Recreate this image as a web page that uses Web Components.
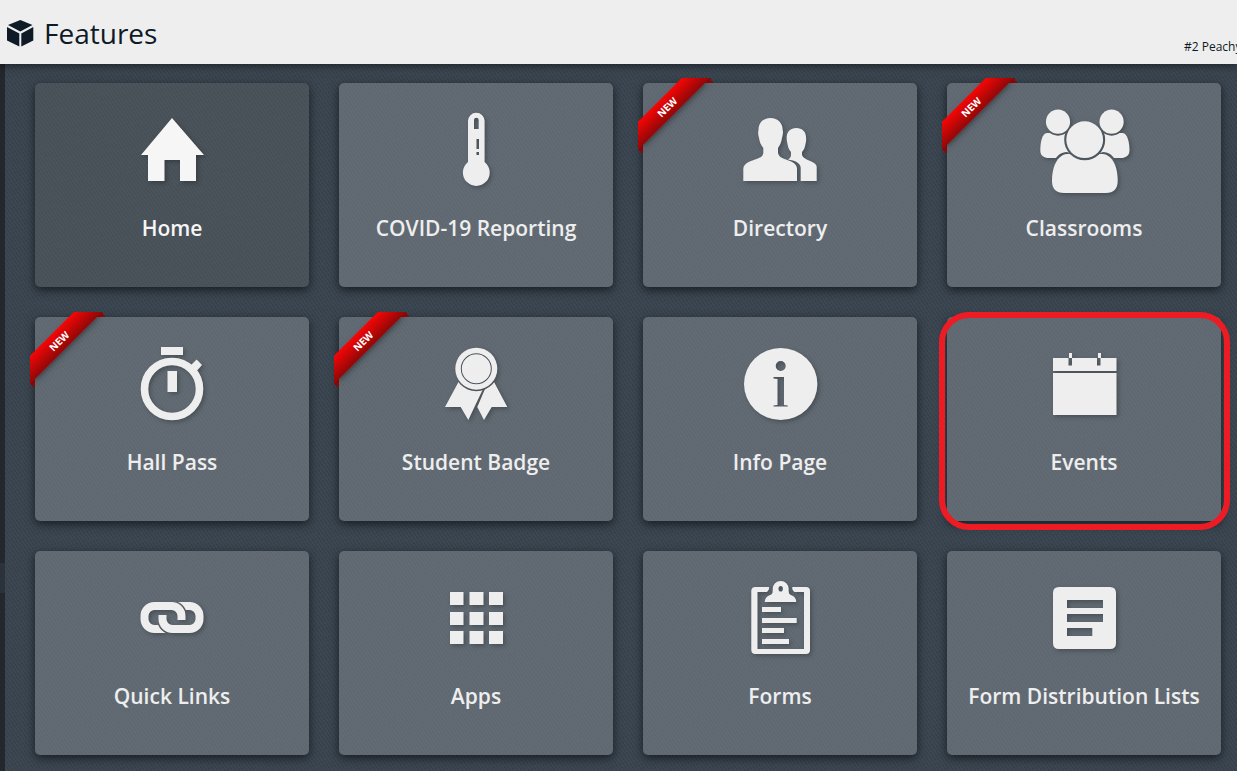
<!DOCTYPE html>
<html lang="en">
<head>
<meta charset="utf-8">
<meta name="viewport" content="width=device-width, initial-scale=1">
<title>Features</title>
<style>
  html, body { margin: 0; min-height: 100%; }
  body { font-family: "Open Sans", "Noto Sans", sans-serif; background: #38434e; overflow-x: hidden; }
</style>
</head>
<body>
<features-page>
  <page-header slot="header" note="#2 Peachy">Features</page-header>
  <feature-card icon="home" current>Home</feature-card>
  <feature-card icon="thermometer">COVID-19 Reporting</feature-card>
  <feature-card icon="people" badge="NEW">Directory</feature-card>
  <feature-card icon="group" badge="NEW">Classrooms</feature-card>
  <feature-card icon="stopwatch" badge="NEW">Hall Pass</feature-card>
  <feature-card icon="award" badge="NEW">Student Badge</feature-card>
  <feature-card icon="info">Info Page</feature-card>
  <feature-card icon="calendar" highlighted>Events</feature-card>
  <feature-card icon="links">Quick Links</feature-card>
  <feature-card icon="apps">Apps</feature-card>
  <feature-card icon="clipboard">Forms</feature-card>
  <feature-card icon="article">Form Distribution Lists</feature-card>
</features-page>

<script>
const ICONS = {
  home: `<path d="M50 13L82 50H74V76H58V55H42.500V76H26V50H19Z"/>`,
  thermometer: `<path fill-rule="evenodd" d="M42 57V16a8.300 8.300 0 0 1 16.600 0V57A13.400 13.400 0 1 1 42 57ZM48 24h4.700V15a2.300 2.300 0 0 0-4.700 0ZM50.500 34v10h2.500V34ZM50.500 47v3h2.500v-3Z"/>`,
  people: `<path d="M40.500 13C48 13 52.700 18 52.700 25C53.500 27 52.500 31 52 33C51.500 37 50 40 48 43V48C49 52 52 53 56 54.500C63 57 67 59 67 64V76H13.300V64C13.500 59 18 57 25 54.500C29 53 33 52 33.300 48V43C31 40 29.500 37 29 33C28 30 28 27 28.500 25C28.500 18 33 13 40.500 13Z"/>
    <path d="M66.300 23C72.500 23 76 27 76 32C76.500 34 76 37 75.500 39C75 42 74 45 72 47V50C73 53 76 54 79 55.500C84 57.500 86.700 59 86.700 62V76H70.700V63C70.700 58 65 55.500 58 54.500C60 53 61 52 61 50V47C59 45 58 42 57.500 39C57 37 56.500 34 56.700 32C57 26.500 60.500 23 66.300 23Z"/>`,
  group: `<mask id="m" maskUnits="userSpaceOnUse" x="0" y="0" width="100" height="90"><rect width="100" height="90" fill="#fff"/><circle cx="50.700" cy="34.700" r="20.500" fill="#000"/></mask>
    <mask id="n" maskUnits="userSpaceOnUse" x="0" y="0" width="100" height="90"><rect width="100" height="90" fill="#fff"/><g fill="#000"><circle cx="50.700" cy="34.700" r="20.500"/><circle cx="24" cy="16.700" r="14"/><circle cx="77.600" cy="16.700" r="14"/><path d="M16 76C16 62 21 47 33 47C43 51 59 51 69 47C81 47 86 62 86 76Z"/></g></mask>
    <circle cx="50.700" cy="34.700" r="18.400"/><circle cx="24" cy="16.700" r="12.100"/><circle cx="77.600" cy="16.700" r="12.100"/>
    <g mask="url(#n)"><path d="M13 28H36V53H13C8.500 52 6.300 50 6.300 45C6.300 38 8 28 13 28Z"/><path d="M88.600 28H65.600V53H88.600C93 52 95.500 50 95.500 45C95.500 38 93.500 28 88.600 28Z"/></g>
    <path mask="url(#m)" d="M33 49H68.500C79 50 83.700 62 83.700 76C83.700 84 79.500 88 72 88H30C22 88 18 84 18 76C18 62 23 50 33 49Z"/>`,
  stopwatch: `<path d="M39 8H61V16H39ZM45.500 32H55V53H45.500ZM74.700 20.500L80 26L74.700 32L68 27Z"/><circle cx="50" cy="50" r="27.500" fill="none" stroke="currentColor" stroke-width="7.600"/>`,
  award: `<mask id="m" maskUnits="userSpaceOnUse" x="0" y="0" width="100" height="90"><rect width="100" height="90" fill="#fff"/><circle cx="50.300" cy="29.700" r="22.500" fill="#000"/></mask>
    <path fill-rule="evenodd" d="M50.300 8.700a21 21 0 1 1 0 42a21 21 0 1 1 0-42ZM50.300 14.200a15.500 15.500 0 1 0 0 31a15.500 15.500 0 1 0 0-31ZM50.300 15.200a14.500 14.500 0 1 1 0 29a14.500 14.500 0 1 1 0-29Z"/>
    <path mask="url(#m)" d="M32.500 43L19 68H34.700L42.300 81L57 50L40 40ZM68 43L81.300 68H65.700L58 81L51.300 68L59 50Z"/>`,
  info: `<path fill-rule="evenodd" d="M50.700 9a36.700 36 0 1 1 0 72a36.700 36 0 1 1 0-72ZM50.700 22a5 5 0 1 0 0 10a5 5 0 1 0 0-10ZM43.500 38V39.500L47.500 40V66L43.500 66.500V67.500H57.700V66.500L54 66V38Z"/>`,
  calendar: `<path d="M19 19H34.500V26.500H38V19H63V26.500H66.500V19H82.500V32H19ZM19 34H82.500V76H19ZM35 14h3v5h-3ZM64 14h3v5h-3Z"/>`,
  links: `<mask id="m" maskUnits="userSpaceOnUse" x="0" y="0" width="100" height="90"><rect width="100" height="90" fill="#fff"/><path d="M40.500 42v4a10 10 0 0 0 10 10" fill="none" stroke="#000" stroke-width="11"/></mask>
    <g id="a" fill="none" stroke="currentColor" stroke-width="8"><path mask="url(#m)" d="M59.500 47V43a10 10 0 0 0-10-10H32.500a10 10 0 0 0-10 10v3a10 10 0 0 0 10 10H46"/></g><use href="#a" transform="rotate(180 50 44.500)"/>`,
  apps: `<path d="M24 19h13.500v13H24ZM43.500 19h14v13h-14ZM63 19h14v13H63ZM24 39h13.500v13H24ZM43.500 39h14v13h-14ZM63 39h14v13H63ZM24 58h13.500v13H24ZM43.500 58h14v13h-14ZM63 58h14v13H63Z"/>`,
  clipboard: `<path d="M39 14V16Q38 18 37 19H27.500V76H74V19H64.500Q63 18 62.300 16V14H76Q80 14 80 18V77Q80 81 76 81H25.500Q21.300 81 21.300 77V18Q21.300 14 25.500 14Z"/>
    <path fill-rule="evenodd" d="M34.700 29Q35 24 39 22.500Q43 21.500 42.700 18V16A8 8 0 0 1 58.700 16V18Q58.500 21.500 62 22.500Q66 24 66.300 29ZM50.700 13a2.200 2.800 0 1 0 0 5.600a2.200 2.800 0 1 0 0-5.600Z"/>
    <path d="M32 34h19v5H32ZM32 45h34.700v5H32ZM32 55h22v5H32ZM32 66h27v5H32Z"/>`,
  article: `<path fill-rule="evenodd" d="M25 14H76Q82 14 82 20V70Q82 76 76 76H25Q19 76 19 70V20Q19 14 25 14ZM33 27V35H69V27ZM33 41V49H69V41ZM33 55V63H58.300V55Z"/>`
};

class FeatureIcon extends HTMLElement {
  connectedCallback() {
    const root = this.attachShadow({ mode: "open" });
    root.innerHTML = `
      <style>
        :host { display: block; width: 100px; height: 90px; color: inherit; }
        svg { display: block; overflow: visible; filter: drop-shadow(2px 2px 2px rgba(0,0,0,.25)); }
      </style>
      <svg width="100" height="90" viewBox="0 0 100 90" fill="currentColor" aria-hidden="true">${ICONS[this.getAttribute("name")]}</svg>`;
  }
}

class CornerRibbon extends HTMLElement {
  connectedCallback() {
    const root = this.attachShadow({ mode: "open" });
    root.innerHTML = `
      <style>
        :host { position: absolute; left: -5px; top: -5px; width: 75px; height: 75px; overflow: hidden; pointer-events: none; }
        :host::before { content: ""; position: absolute; inset: 0; background: #8f0808;
          clip-path: polygon(70px 0, 72px 0, 75px 5px, 64px 5px, 5px 64px, 5px 75px, 0 72px, 0 70px); }
        span { position: absolute; left: -21px; top: 19px; width: 100px; line-height: 20px;
          transform: rotate(-45deg); text-align: center; font-size: 10px; font-weight: 700; color: #fff;
          background: linear-gradient(#f70505, #8f0808); box-shadow: 0 3px 10px -5px #000; }
      </style>
      <span><slot></slot></span>`;
  }
}

class FeatureCard extends HTMLElement {
  connectedCallback() {
    const badge = this.getAttribute("badge");
    const icon = this.getAttribute("icon");
    const current = this.hasAttribute("current");
    const root = this.attachShadow({ mode: "open" });
    root.innerHTML = `
      <style>
        :host { display: block; position: relative; border-radius: 5px; background: #606972;
          box-shadow: 0 3px 10px rgba(0,0,0,.6); }
        :host([current]) { background: #485058; }
        a { display: flex; flex-direction: column; align-items: center; gap: 17px; box-sizing: border-box;
          height: 100%; padding: 22px 8px 0; border-radius: 5px; color: #eee; text-decoration: none;
          background: repeating-linear-gradient(55deg, rgba(0,0,0,.025) 0 1px, rgba(255,255,255,.015) 1px 3px); }
        :host([current]) a { color: #f6f6f6; }
        .label { font-size: 21px; line-height: 32px; font-weight: 600; white-space: nowrap; }
        :host([highlighted])::after { content: ""; position: absolute; inset: -5px -9px -9px -8px;
          border: 6px solid #ed1c24; border-radius: 30px; pointer-events: none; }
      </style>
      <a href="#${icon}"${current ? ' aria-current="page"' : ""}>
        <feature-icon name="${icon}"></feature-icon>
        <span class="label"><slot></slot></span>
      </a>
      ${badge ? `<corner-ribbon>${badge}</corner-ribbon>` : ""}`;
  }
}

class PageHeader extends HTMLElement {
  connectedCallback() {
    const root = this.attachShadow({ mode: "open" });
    root.innerHTML = `
      <style>
        :host { display: block; position: relative; background: #eee; color: #0f1a27; box-shadow: 0 2px 8px rgba(0,0,0,.5); }
        header { display: flex; align-items: center; height: 64px; padding: 2px 0 0 7px; box-sizing: border-box; gap: 10px; }
        h1 { flex: 1; margin: 0; font-size: 28px; line-height: 40px; font-weight: 400; }
        svg { display: block; }
        .note { width: 53px; align-self: flex-end; padding-bottom: 7px; font-size: 12px; line-height: 20px; white-space: nowrap; }
      </style>
      <header>
        <svg width="27" height="27" viewBox="0 0 27 27" fill="currentColor" aria-hidden="true">
          <path d="M13.300 0L25.500 5L13.300 11.500L1 5ZM0 7L12.300 13.500V26.500L0 20.500ZM26.300 7V20.500L14.300 26.500V13.500Z"/>
        </svg>
        <h1><slot></slot></h1>
        <span class="note">${this.getAttribute("note")}</span>
      </header>`;
  }
}

class FeaturesPage extends HTMLElement {
  connectedCallback() {
    const root = this.attachShadow({ mode: "open" });
    root.innerHTML = `
      <style>
        :host { display: flex; flex-direction: column; min-height: 100vh; }
        .top { position: relative; z-index: 2; }
        .body { flex: 1; display: grid; grid-template-columns: 5px 1fr; }
        aside { display: grid; grid-template-rows: 499fr 30px 178fr; background: #25272f; }
        aside i { grid-row: 2; background: #2b323c; }
        main { position: relative; z-index: 0; display: grid; grid-template-columns: repeat(4, 1fr); grid-auto-rows: 204px;
          align-content: start; gap: 30px; padding: 19px 16px 15px 30px;
          background: repeating-linear-gradient(55deg, rgba(0,0,0,.06) 0 1px, rgba(255,255,255,.015) 1px 3px), #39444f; }
      </style>
      <div class="top"><slot name="header"></slot></div>
      <div class="body">
        <aside><i></i></aside>
        <main><slot></slot></main>
      </div>`;
  }
}

customElements.define("feature-icon", FeatureIcon);
customElements.define("corner-ribbon", CornerRibbon);
customElements.define("feature-card", FeatureCard);
customElements.define("page-header", PageHeader);
customElements.define("features-page", FeaturesPage);
</script>
</body>
</html>
